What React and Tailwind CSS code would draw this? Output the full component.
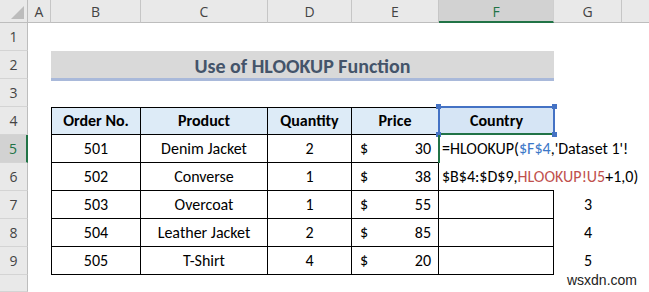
import React from "react";

const cols = ["A", "B", "C", "D", "E", "F", "G"];
const rows = [
  ["501", "Denim Jacket", "2", "30"],
  ["502", "Converse", "1", "38"],
  ["503", "Overcoat", "1", "55"],
  ["504", "Leather Jacket", "2", "85"],
  ["505", "T-Shirt", "4", "20"],
];
const rowStarts = ["row-start-2", "row-start-3", "row-start-4", "row-start-5", "row-start-6", "row-start-7", "row-start-8", "row-start-9", "row-start-10", "row-start-11"];

const base = "flex items-center border-r border-b border-black text-[16px] text-black";
const cell = base + " justify-center";

function Handle({ className }) {
  return <span className={"absolute w-[5px] h-[5px] bg-[#4472c4] " + className} />;
}

export default function App() {
  return (
    <div className="w-[649px] h-[292px] overflow-hidden bg-white relative" style={{ fontFamily: "Carlito, Calibri, Lato, sans-serif" }}>
      <div className="grid grid-cols-[28px_23px_90px_127px_84px_87px_115px_68px_1fr] grid-rows-[23px_repeat(9,28px)_1fr] h-full">
        {/* corner */}
        <div className="col-start-1 row-start-1 bg-[#e9e9e9] border-r border-b border-[#bdbdbd] flex items-end justify-end pr-[3px] pb-[3px]">
          <svg width="13" height="13" viewBox="0 0 13 13">
            <polygon points="13,0 13,13 0,13" fill="#bcbcbc" />
          </svg>
        </div>
        {/* column headers */}
        {cols.map((c) => (
          <div
            key={c}
            className={
              c === "F"
                ? "row-start-1 bg-[#d2d2d2] border-r border-[#cfcfcf] border-b-2 border-b-[#217346] flex items-center justify-center text-[14px] text-[#217346] pt-[2px]"
                : "row-start-1 bg-[#e9e9e9] border-r border-b border-[#c6c6c6] border-b-[#bdbdbd] flex items-center justify-center text-[14px] text-[#444]"
            }
            style={{ fontFamily: "'Open Sans', 'Noto Sans', sans-serif" }}
          >
            {c}
          </div>
        ))}
        <div className="row-start-1 col-start-9 bg-[#e9e9e9] border-b border-[#bdbdbd]" />

        {/* row headers */}
        {rowStarts.map((rs, i) => (
          <div
            key={rs}
            className={
              "col-start-1 border-b border-[#d4d4d4] flex items-end justify-center pb-[3px] text-[14px] " +
              rs +
              (i === 4
                ? " bg-[#d2d2d2] border-r-2 border-r-[#217346] text-[#217346]"
                : " bg-[#e9e9e9] border-r border-r-[#bdbdbd] text-[#444]")
            }
            style={{ fontFamily: "'Open Sans', 'Noto Sans', sans-serif" }}
          >
            {i < 9 ? i + 1 : ""}
          </div>
        ))}

        {/* title */}
        <div className="col-start-3 col-span-5 row-start-3 relative">
          <div className="h-[30px] bg-[#d9d9d9] border-b-[3px] border-[#a9b9da] flex items-center justify-center pt-[3px] text-[20px] font-bold text-[#44546a]">
            Use of HLOOKUP Function
          </div>
        </div>

        {/* table */}
        <div className="col-start-3 col-span-5 row-start-5 row-span-6 grid grid-cols-[90px_127px_84px_87px_115px] grid-rows-[repeat(6,28px)]">
          <div className={cell + " border-l border-t bg-[#ddebf7] font-bold"}>Order No.</div>
          <div className={cell + " border-t bg-[#ddebf7] font-bold"}>Product</div>
          <div className={cell + " border-t bg-[#ddebf7] font-bold"}>Quantity</div>
          <div className={cell + " border-t bg-[#ddebf7] font-bold"}>Price</div>
          <div className="relative flex items-center justify-center bg-[#d6e5f5] font-bold text-[16px] text-black">
            Country
            <span className="absolute left-[-1px] right-[-1px] top-[-1px] bottom-0 border-2 border-[#4472c4] border-b-0" />
            <span className="absolute left-[-1px] right-[-1px] bottom-0 h-[2px] bg-[#217346]" />
            <Handle className="left-[-3px] top-[-3px]" />
            <Handle className="right-[-3px] top-[-3px]" />
            <Handle className="left-[-3px] bottom-[-2px]" />
            <Handle className="right-[-3px] bottom-[-2px]" />
          </div>
          {rows.map((r, i) => (
            <React.Fragment key={r[0]}>
              <div className={cell + " border-l"}>{r[0]}</div>
              <div className={cell}>{r[1]}</div>
              <div className={cell}>{r[2]}</div>
              <div className={base + " justify-between pl-[8px] pr-[7px]"}>
                <span>$</span>
                <span>{r[3]}</span>
              </div>
              {i === 0 ? (
                <div className="relative border-l-2 border-[#217346] -ml-[1px]">
                  <div className="absolute left-[2px] top-0 z-10 whitespace-nowrap text-[16px] leading-[28px] text-black">
                    <div>
                      =HLOOKUP(<span className="text-[#3c78c8]">$F$4</span>,'Dataset 1'!
                    </div>
                    <div>
                      $B$4:$D$9,<span className="text-[#c0504d]">HLOOKUP!U5</span>+1,0)
                    </div>
                  </div>
                </div>
              ) : i === 1 ? (
                <div className="border-b border-black" />
              ) : (
                <div className={cell} />
              )}
            </React.Fragment>
          ))}
        </div>

        {/* G values */}
        {["3", "4", "5"].map((v, i) => (
          <div
            key={v}
            className={"col-start-8 flex items-center justify-center text-[16px] text-black " + ["row-start-8", "row-start-9", "row-start-10"][i]}
          >
            {v}
          </div>
        ))}
      </div>

      <div className="absolute right-[12px] bottom-[4px] text-[14px] leading-[16px] text-[#222]" style={{ fontFamily: "'Liberation Sans', Arial, sans-serif" }}>
        wsxdn.com
      </div>
    </div>
  );
}
